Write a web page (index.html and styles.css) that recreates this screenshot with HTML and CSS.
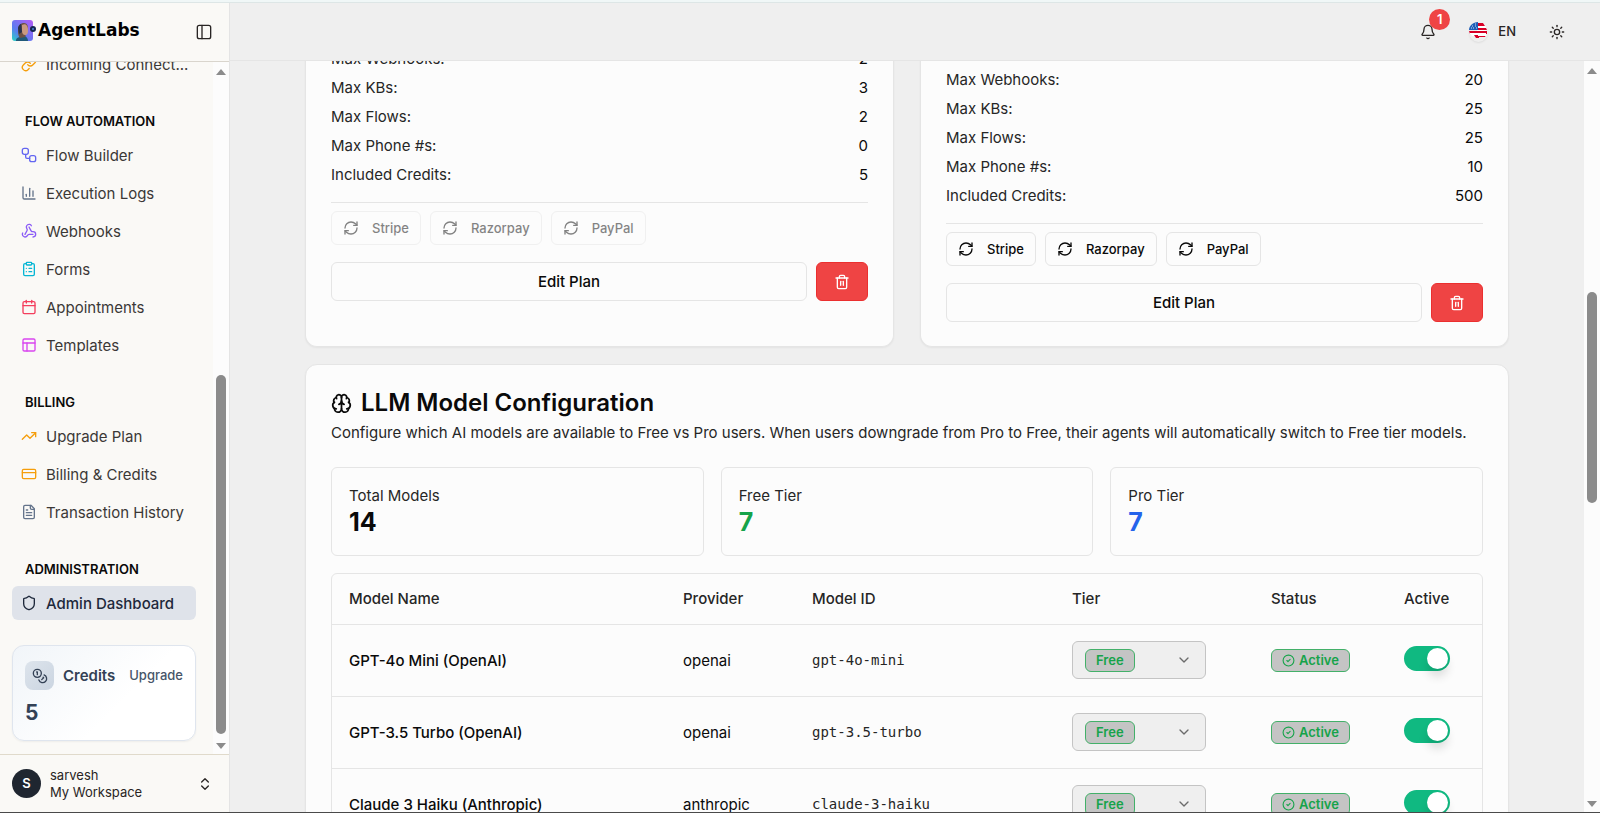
FILE: index.html
```html
<!DOCTYPE html>
<html lang="en">
<head>
  <meta charset="UTF-8">
  <meta name="viewport" content="width=device-width, initial-scale=1.0">
  <title>AgentLabs - Admin Dashboard</title>
  <link rel="stylesheet" href="styles.css">
</head>
<body>
  <!-- icon sprite -->
  <svg class="sprite" aria-hidden="true">
    <symbol id="i-link" viewBox="0 0 24 24"><path d="M10 13a5 5 0 0 0 7.54.54l3-3a5 5 0 0 0-7.07-7.07l-1.72 1.71"/><path d="M14 11a5 5 0 0 0-7.54-.54l-3 3a5 5 0 0 0 7.07 7.07l1.71-1.71"/></symbol>
    <symbol id="i-flow" viewBox="0 0 24 24"><rect x="2" y="2" width="9" height="9" rx="3"/><path d="M7 11v4a2 2 0 0 0 2 2h4"/><rect x="13" y="13" width="9" height="9" rx="3"/></symbol>
    <symbol id="i-chart" viewBox="0 0 24 24"><path d="M3 3v16a2 2 0 0 0 2 2h16"/><path d="M18 17V9"/><path d="M13 17V5"/><path d="M8 17v-3"/></symbol>
    <symbol id="i-webhook" viewBox="0 0 24 24"><path d="M18 16.98h-5.99c-1.1 0-1.95.94-2.48 1.9A4 4 0 0 1 2 17c.01-.7.2-1.4.57-2"/><path d="m6 17 3.13-5.78c.53-.97.1-2.18-.5-3.1a4 4 0 1 1 6.89-4.06"/><path d="m12 6 3.13 5.73C15.66 12.7 16.9 13 18 13a4 4 0 0 1 0 8"/></symbol>
    <symbol id="i-clipboard" viewBox="0 0 24 24"><rect x="8" y="2" width="8" height="4" rx="1"/><path d="M16 4h2a2 2 0 0 1 2 2v14a2 2 0 0 1-2 2H6a2 2 0 0 1-2-2V6a2 2 0 0 1 2-2h2"/><path d="M12 11h4"/><path d="M12 16h4"/><path d="M8 11h.01"/><path d="M8 16h.01"/></symbol>
    <symbol id="i-calendar" viewBox="0 0 24 24"><path d="M8 2v4"/><path d="M16 2v4"/><rect x="3" y="4" width="18" height="18" rx="2"/><path d="M3 10h18"/></symbol>
    <symbol id="i-template" viewBox="0 0 24 24"><rect x="3" y="3" width="18" height="18" rx="2"/><path d="M3 9h18"/><path d="M9 21V9"/></symbol>
    <symbol id="i-trend" viewBox="0 0 24 24"><path d="M16 7h6v6"/><path d="m22 7-8.5 8.5-5-5L2 17"/></symbol>
    <symbol id="i-card" viewBox="0 0 24 24"><rect x="2" y="5" width="20" height="14" rx="2"/><path d="M2 10h20"/></symbol>
    <symbol id="i-file" viewBox="0 0 24 24"><path d="M15 2H6a2 2 0 0 0-2 2v16a2 2 0 0 0 2 2h12a2 2 0 0 0 2-2V7Z"/><path d="M14 2v4a2 2 0 0 0 2 2h4"/><path d="M10 9H8"/><path d="M16 13H8"/><path d="M16 17H8"/></symbol>
    <symbol id="i-shield" viewBox="0 0 24 24"><path d="M20 13c0 5-3.5 7.5-7.66 8.95a1 1 0 0 1-.67-.01C7.5 20.5 4 18 4 13V6a1 1 0 0 1 1-1c2 0 4.5-1.2 6.24-2.72a1.17 1.17 0 0 1 1.52 0C14.51 3.81 17 5 19 5a1 1 0 0 1 1 1z"/></symbol>
    <symbol id="i-coins" viewBox="0 0 24 24"><circle cx="8" cy="8" r="6"/><path d="M18.09 10.37A6 6 0 1 1 10.34 18"/><path d="M7 6h1v4"/><path d="m16.71 13.88.7.71-2.82 2.82"/></symbol>
    <symbol id="i-updown" viewBox="0 0 24 24"><path d="m7 15 5 5 5-5"/><path d="m7 9 5-5 5 5"/></symbol>
    <symbol id="i-down" viewBox="0 0 24 24"><path d="m6 9 6 6 6-6"/></symbol>
    <symbol id="i-panel" viewBox="0 0 24 24"><rect x="2" y="2" width="20" height="20" rx="3"/><path d="M9 2v20"/></symbol>
    <symbol id="i-bell" viewBox="0 0 24 24"><path d="M10.27 21a2 2 0 0 0 3.46 0"/><path d="M3.26 15.33A1 1 0 0 0 4 17h16a1 1 0 0 0 .74-1.67C19.41 13.96 18 12.5 18 8A6 6 0 0 0 6 8c0 4.5-1.41 5.96-2.74 7.33"/></symbol>
    <symbol id="i-sun" viewBox="0 0 24 24"><circle cx="12" cy="12" r="4"/><path d="M12 2v2"/><path d="M12 20v2"/><path d="m4.93 4.93 1.41 1.41"/><path d="m17.66 17.66 1.41 1.41"/><path d="M2 12h2"/><path d="M20 12h2"/><path d="m6.34 17.66-1.41 1.41"/><path d="m19.07 4.93-1.41 1.41"/></symbol>
    <symbol id="i-refresh" viewBox="0 0 24 24"><path d="M3 12a9 9 0 0 1 9-9 9.75 9.75 0 0 1 6.74 2.74L21 8"/><path d="M21 3v5h-5"/><path d="M21 12a9 9 0 0 1-9 9 9.75 9.75 0 0 1-6.74-2.74L3 16"/><path d="M8 16H3v5"/></symbol>
    <symbol id="i-trash" viewBox="0 0 24 24"><path d="M3 6h18"/><path d="M19 6v14c0 1-1 2-2 2H7c-1 0-2-1-2-2V6"/><path d="M8 6V4c0-1 1-2 2-2h4c1 0 2 1 2 2v2"/><path d="M10 11v6"/><path d="M14 11v6"/></symbol>
    <symbol id="i-brain" viewBox="0 0 24 24"><path d="M12 18V5"/><path d="M15 13a4.17 4.17 0 0 1-3-4 4.17 4.17 0 0 1-3 4"/><path d="M17.6 6.5A3 3 0 1 0 12 5a3 3 0 1 0-5.6 1.5"/><path d="M18 5.13a4 4 0 0 1 2.53 5.77"/><path d="M18 18a4 4 0 0 0 2-7.46"/><path d="M19.97 17.48A4 4 0 1 1 12 18a4 4 0 1 1-7.97-.52"/><path d="M6 18a4 4 0 0 1-2-7.46"/><path d="M6 5.13a4 4 0 0 0-2.53 5.77"/></symbol>
    <symbol id="i-check" viewBox="0 0 24 24"><circle cx="12" cy="12" r="10"/><path d="m9 12 2 2 4-4"/></symbol>
  </svg>

  <div class="top-strip"></div>

  <div class="app">
    <!-- Sidebar -->
    <aside class="sidebar">
      <div class="sidebar-header">
        <a class="brand" href="#">
          <svg class="brand-logo" viewBox="0 0 24 21" aria-hidden="true">
            <defs>
              <linearGradient id="logo-bg" x1="0" y1="1" x2="1" y2="0">
                <stop offset="0" stop-color="#27d8c0"/>
                <stop offset=".35" stop-color="#5b7cf0"/>
                <stop offset="1" stop-color="#b55cf6"/>
              </linearGradient>
            </defs>
            <rect width="21" height="21" rx="3" fill="url(#logo-bg)"/>
            <path d="M4 21c0-3 2-4 5-4l4-1c2 1 3 3 3 5z" fill="#1f5a78"/>
            <path d="M6 9c0-4 3-6 6-6 3 0 4 3 4 5l-3 9-5 1c-2-2-2-5-2-9z" fill="#6b5145"/>
            <path d="M10 5c4-2 6 1 6 5s-1 5-3 5-3-2-3-4z" fill="#c99a80"/>
            <path d="M6 8c1-3 2-4 3-4l1 8-3 2z" fill="#27304f"/>
            <circle cx="21" cy="9" r="3" fill="#14264f"/>
            <circle cx="21" cy="9" r="1" fill="#4d86d8"/>
          </svg>
          <span>AgentLabs</span>
        </a>
        <button class="icon-btn" aria-label="Toggle sidebar"><svg class="icon"><use href="#i-panel"/></svg></button>
      </div>

      <div class="sidebar-body">
        <div class="sidebar-content">
          <nav class="nav">
            <ul class="nav-group">
              <li><a class="nav-item" href="#"><svg class="icon amber"><use href="#i-link"/></svg>Incoming Connect...</a></li>
            </ul>
            <ul class="nav-group">
              <li class="nav-label">FLOW AUTOMATION</li>
              <li><a class="nav-item" href="#"><svg class="icon indigo"><use href="#i-flow"/></svg>Flow Builder</a></li>
              <li><a class="nav-item" href="#"><svg class="icon slate"><use href="#i-chart"/></svg>Execution Logs</a></li>
              <li><a class="nav-item" href="#"><svg class="icon violet"><use href="#i-webhook"/></svg>Webhooks</a></li>
              <li><a class="nav-item" href="#"><svg class="icon cyan"><use href="#i-clipboard"/></svg>Forms</a></li>
              <li><a class="nav-item" href="#"><svg class="icon rose"><use href="#i-calendar"/></svg>Appointments</a></li>
              <li><a class="nav-item" href="#"><svg class="icon fuchsia"><use href="#i-template"/></svg>Templates</a></li>
            </ul>
            <ul class="nav-group">
              <li class="nav-label">BILLING</li>
              <li><a class="nav-item" href="#"><svg class="icon amber"><use href="#i-trend"/></svg>Upgrade Plan</a></li>
              <li><a class="nav-item" href="#"><svg class="icon amber"><use href="#i-card"/></svg>Billing &amp; Credits</a></li>
              <li><a class="nav-item" href="#"><svg class="icon slate"><use href="#i-file"/></svg>Transaction History</a></li>
            </ul>
            <ul class="nav-group">
              <li class="nav-label">ADMINISTRATION</li>
              <li><a class="nav-item active" href="#"><svg class="icon"><use href="#i-shield"/></svg>Admin Dashboard</a></li>
            </ul>
          </nav>

          <div class="credits">
            <div class="credits-top">
              <span class="credits-icon"><svg class="icon"><use href="#i-coins"/></svg></span>
              <span class="credits-title">Credits</span>
              <a class="credits-link" href="#">Upgrade</a>
            </div>
            <div class="credits-value">5</div>
          </div>
        </div>
        <div class="scrollbar">
          <span class="arrow up"></span>
          <div class="track"><div class="thumb nav-thumb"></div></div>
          <span class="arrow down"></span>
        </div>
      </div>

      <button class="user">
        <span class="avatar">S</span>
        <span class="user-text">
          <span>sarvesh</span>
          <span>My Workspace</span>
        </span>
        <svg class="icon"><use href="#i-updown"/></svg>
      </button>
    </aside>

    <!-- Right side -->
    <div class="page">
      <header class="topbar">
        <button class="icon-btn bell" aria-label="Notifications">
          <svg class="icon"><use href="#i-bell"/></svg>
          <span class="bell-count">1</span>
        </button>
        <button class="lang">
          <span class="flag">
            <svg viewBox="0 0 18 18" aria-hidden="true">
              <path d="M8 1h6l3 4v9H3L0 9h8z" fill="#fff"/>
              <path d="M8 1h6l2 3H8zM8 6h9l1 2H8zM0 9h18v3H1zM5 13h12l-1 2h-6v1H7z" fill="#d80027"/>
              <path d="M1 11h16v1H1zM9 13h8v1H9z" fill="#fff"/>
              <path d="M9 0v8H0c0-4 4-8 9-8z" fill="#1f5fb8"/>
              <path d="M3 4h1M6 4h1M4 6h1M7 6h1M2 6h1M6 2h1" stroke="#cfe0f5"/>
            </svg>
          </span>
          EN
        </button>
        <button class="icon-btn" aria-label="Toggle theme"><svg class="icon"><use href="#i-sun"/></svg></button>
      </header>

      <div class="page-body">
        <main class="main">
          <div class="content">
            <!-- Plans -->
            <div class="plans">
              <section class="card plan">
                <dl class="limits">
                  <div><dt>Max Webhooks:</dt><dd>2</dd></div>
                  <div><dt>Max KBs:</dt><dd>3</dd></div>
                  <div><dt>Max Flows:</dt><dd>2</dd></div>
                  <div><dt>Max Phone #s:</dt><dd>0</dd></div>
                  <div><dt>Included Credits:</dt><dd>5</dd></div>
                </dl>
                <div class="sync">
                  <button class="btn btn-sm" disabled><svg class="icon"><use href="#i-refresh"/></svg>Stripe</button>
                  <button class="btn btn-sm" disabled><svg class="icon"><use href="#i-refresh"/></svg>Razorpay</button>
                  <button class="btn btn-sm" disabled><svg class="icon"><use href="#i-refresh"/></svg>PayPal</button>
                </div>
                <div class="plan-actions">
                  <button class="btn btn-edit">Edit Plan</button>
                  <button class="btn btn-delete" aria-label="Delete plan"><svg class="icon"><use href="#i-trash"/></svg></button>
                </div>
              </section>

              <section class="card plan plan-pro">
                <dl class="limits">
                  <div><dt>Max Webhooks:</dt><dd>20</dd></div>
                  <div><dt>Max KBs:</dt><dd>25</dd></div>
                  <div><dt>Max Flows:</dt><dd>25</dd></div>
                  <div><dt>Max Phone #s:</dt><dd>10</dd></div>
                  <div><dt>Included Credits:</dt><dd>500</dd></div>
                </dl>
                <div class="sync">
                  <button class="btn btn-sm"><svg class="icon"><use href="#i-refresh"/></svg>Stripe</button>
                  <button class="btn btn-sm"><svg class="icon"><use href="#i-refresh"/></svg>Razorpay</button>
                  <button class="btn btn-sm"><svg class="icon"><use href="#i-refresh"/></svg>PayPal</button>
                </div>
                <div class="plan-actions">
                  <button class="btn btn-edit">Edit Plan</button>
                  <button class="btn btn-delete" aria-label="Delete plan"><svg class="icon"><use href="#i-trash"/></svg></button>
                </div>
              </section>
            </div>

            <!-- LLM models -->
            <section class="card llm">
              <h2 class="llm-title"><svg class="icon"><use href="#i-brain"/></svg>LLM Model Configuration</h2>
              <p class="llm-desc">Configure which AI models are available to Free vs Pro users. When users downgrade from Pro to Free, their agents will automatically switch to Free tier models.</p>

              <div class="stats">
                <div class="stat"><div>Total Models</div><strong>14</strong></div>
                <div class="stat"><div>Free Tier</div><strong class="green">7</strong></div>
                <div class="stat"><div>Pro Tier</div><strong class="blue">7</strong></div>
              </div>

              <div class="table-box">
                <table class="models">
                  <colgroup>
                    <col class="c-name"><col class="c-provider"><col class="c-id"><col class="c-tier"><col class="c-status"><col class="c-active">
                  </colgroup>
                  <thead>
                    <tr>
                      <th>Model Name</th>
                      <th>Provider</th>
                      <th>Model ID</th>
                      <th>Tier</th>
                      <th>Status</th>
                      <th>Active</th>
                    </tr>
                  </thead>
                  <tbody>
                    <tr>
                      <td class="name">GPT-4o Mini (OpenAI)</td>
                      <td>openai</td>
                      <td class="mono">gpt-4o-mini</td>
                      <td><label class="tier"><select aria-label="Tier for GPT-4o Mini"><option>Free</option><option>Pro</option></select><svg class="icon"><use href="#i-down"/></svg></label></td>
                      <td><span class="status"><svg class="icon"><use href="#i-check"/></svg>Active</span></td>
                      <td><input class="switch" type="checkbox" checked aria-label="GPT-4o Mini active"></td>
                    </tr>
                    <tr>
                      <td class="name">GPT-3.5 Turbo (OpenAI)</td>
                      <td>openai</td>
                      <td class="mono">gpt-3.5-turbo</td>
                      <td><label class="tier"><select aria-label="Tier for GPT-3.5 Turbo"><option>Free</option><option>Pro</option></select><svg class="icon"><use href="#i-down"/></svg></label></td>
                      <td><span class="status"><svg class="icon"><use href="#i-check"/></svg>Active</span></td>
                      <td><input class="switch" type="checkbox" checked aria-label="GPT-3.5 Turbo active"></td>
                    </tr>
                    <tr>
                      <td class="name">Claude 3 Haiku (Anthropic)</td>
                      <td>anthropic</td>
                      <td class="mono">claude-3-haiku</td>
                      <td><label class="tier"><select aria-label="Tier for Claude 3 Haiku"><option>Free</option><option>Pro</option></select><svg class="icon"><use href="#i-down"/></svg></label></td>
                      <td><span class="status"><svg class="icon"><use href="#i-check"/></svg>Active</span></td>
                      <td><input class="switch" type="checkbox" checked aria-label="Claude 3 Haiku active"></td>
                    </tr>
                  </tbody>
                </table>
              </div>
            </section>
          </div>
        </main>
        <div class="scrollbar">
          <span class="arrow up"></span>
          <div class="track"><div class="thumb page-thumb"></div></div>
          <span class="arrow down"></span>
        </div>
      </div>
    </div>
  </div>
</body>
</html>
```
FILE: styles.css
```css
* {
  margin: 0;
  padding: 0;
  box-sizing: border-box;
}

body {
  display: flex;
  flex-direction: column;
  height: 100vh;
  overflow: hidden;
  border-bottom: 1px solid #4a4a4a;
  background-color: #efefef;
  color: #0a0a0a;
  font-family: Inter, "Liberation Sans", sans-serif;
  font-size: 15px;
  line-height: 21px;
}

ul {
  list-style: none;
}

a {
  color: inherit;
  text-decoration: none;
}

button,
select {
  font: inherit;
  color: inherit;
  background: none;
  border: none;
  cursor: pointer;
}

.sprite {
  display: none;
}

.icon {
  width: 16px;
  height: 16px;
  flex-shrink: 0;
  fill: none;
  stroke: currentColor;
  stroke-width: 2;
  stroke-linecap: round;
  stroke-linejoin: round;
}

.amber { color: #f59e0b; }
.indigo { color: #6366f1; }
.slate { color: #64748b; }
.violet { color: #8b5cf6; }
.cyan { color: #06b6d4; }
.rose { color: #f43f5e; }
.fuchsia { color: #d946ef; }

.top-strip {
  height: 3px;
  flex-shrink: 0;
  background-color: #f0f7f7;
  border-bottom: 1px solid #dde6e6;
}

.app {
  display: flex;
  flex: 1;
  min-height: 0;
}

/* Sidebar */
.sidebar {
  display: flex;
  flex-direction: column;
  width: 230px;
  flex-shrink: 0;
  background-color: #faf9f6;
  border-right: 1px solid #e4e4e4;
}

.sidebar-header {
  display: flex;
  align-items: center;
  justify-content: space-between;
  height: 59px;
  flex-shrink: 0;
  padding: 0 12px;
  border-bottom: 1px solid #d9d5cd;
}

.brand {
  display: flex;
  align-items: center;
  gap: 2px;
  padding-bottom: 3px;
  color: #000;
  font-family: "DejaVu Sans", sans-serif;
  font-size: 17px;
  font-weight: 700;
}

.brand-logo {
  width: 24px;
  height: 21px;
}

.icon-btn {
  display: flex;
  align-items: center;
  justify-content: center;
  width: 26px;
  height: 26px;
  color: #292524;
}

.sidebar-body {
  display: flex;
  flex: 1;
  min-height: 0;
}

.sidebar-content {
  display: flex;
  flex-direction: column;
  justify-content: flex-end;
  flex: 1;
  padding: 0 17px 13px 12px;
  overflow: hidden;
}

.nav {
  display: flex;
  flex-direction: column;
  gap: 23px;
}

.nav-group {
  display: flex;
  flex-direction: column;
  gap: 4px;
}

.nav-label {
  height: 30px;
  padding: 0 13px;
  font-size: 13px;
  font-weight: 600;
  line-height: 34px;
}

.nav-item {
  display: flex;
  align-items: center;
  gap: 9px;
  height: 34px;
  padding: 0 9px;
  border-radius: 6px;
  color: #3b3836;
  white-space: nowrap;
}

.nav-item.active {
  background-color: #dfe3ea;
  color: #1e293b;
  font-weight: 500;
}

.credits {
  margin-top: 25px;
  height: 96px;
  padding: 15px 12px;
  border: 1px solid #dfe5ee;
  border-radius: 12px;
  background: linear-gradient(135deg, #f1f5f9, #ffffff 60%);
  box-shadow: 0 1px 2px rgba(0, 0, 0, 0.05);
  color: #334155;
}

.credits-top {
  display: flex;
  align-items: center;
}

.credits-icon {
  display: flex;
  align-items: center;
  justify-content: center;
  width: 29px;
  height: 29px;
  margin-right: 9px;
  border-radius: 8px;
  background: linear-gradient(135deg, #dde4ec, #cbd5e1);
}

.credits-title {
  font-weight: 600;
}

.credits-link {
  margin-left: auto;
  color: #475569;
  font-size: 13px;
  font-weight: 500;
}

.credits-value {
  margin-top: 8px;
  font-size: 21px;
  font-weight: 700;
  line-height: 29px;
}

.user {
  display: flex;
  align-items: center;
  gap: 9px;
  height: 58px;
  flex-shrink: 0;
  padding: 0 16px 0 12px;
  border-top: 1px solid #e0dacb;
  color: #292524;
  text-align: left;
}

.avatar {
  display: flex;
  align-items: center;
  justify-content: center;
  width: 29px;
  height: 29px;
  border-radius: 50%;
  background-color: #1f2630;
  color: #fff;
  font-size: 13px;
  font-weight: 600;
}

.user-text {
  display: flex;
  flex-direction: column;
  flex: 1;
  font-size: 13px;
  line-height: 17px;
}

/* Scrollbars */
.scrollbar {
  display: flex;
  flex-direction: column;
  align-items: center;
  width: 16px;
  flex-shrink: 0;
  padding: 7px 0 5px;
  background-color: #fcfcfc;
}

.arrow {
  border: 5px solid transparent;
}

.arrow.up {
  border-top: none;
  border-bottom: 6px solid #8b8b8b;
}

.arrow.down {
  border-bottom: none;
  border-top: 6px solid #8b8b8b;
}

.track {
  flex: 1;
  min-height: 0;
  padding: 4px 0 7px;
}

.thumb {
  width: 10px;
  border-radius: 5px;
  background-color: #8b8b8b;
}

.nav-thumb {
  height: 359px;
  margin-top: 296px;
}

.page-thumb {
  height: 211px;
  margin-top: 214px;
}

/* Top bar */
.page {
  display: flex;
  flex-direction: column;
  flex: 1;
  min-width: 0;
}

.topbar {
  display: flex;
  align-items: center;
  justify-content: flex-end;
  gap: 28px;
  height: 58px;
  flex-shrink: 0;
  padding: 0 30px;
  border-bottom: 1px solid #e5e5e5;
}

.bell {
  position: relative;
}

.bell-count {
  position: absolute;
  top: -10px;
  right: -9px;
  width: 21px;
  height: 21px;
  border-radius: 50%;
  background-color: #ef4444;
  color: #fff;
  font-size: 13px;
  font-weight: 600;
  line-height: 21px;
  text-align: center;
}

.lang {
  display: flex;
  align-items: center;
  gap: 10px;
  color: #292524;
  font-size: 13px;
  font-weight: 500;
}

.flag {
  width: 19px;
  height: 20px;
  border-radius: 50%;
  box-shadow: 0 1px 2px rgba(0, 0, 0, 0.08);
}

.flag svg {
  display: block;
  width: 18px;
  height: 18px;
}

.page-body {
  display: flex;
  flex: 1;
  min-height: 0;
}

.main {
  flex: 1;
  min-width: 0;
  overflow: hidden;
  padding: 0 75px;
}

.content {
  display: flex;
  flex-direction: column;
  gap: 17px;
  max-width: 1280px;
  margin: -13px auto 0;
}

.card {
  padding: 25px;
  border: 1px solid #e5e5e5;
  border-radius: 12px;
  background-color: #fcfcfc;
  box-shadow: 0 1px 2px rgba(0, 0, 0, 0.05);
}

/* Plan cards */
.plans {
  display: grid;
  grid-template-columns: 1fr 1fr;
  gap: 26px;
}

.plan {
  border-top: none;
  border-radius: 0 0 12px 12px;
  padding-top: 0;
  padding-bottom: 24px;
}

.plan-pro {
  padding-top: 21px;
}

.limits {
  display: flex;
  flex-direction: column;
  gap: 8px;
  padding-bottom: 17px;
  border-bottom: 1px solid #e5e5e5;
}

.limits div {
  display: flex;
  justify-content: space-between;
}

.limits dt {
  color: #262626;
}

.sync {
  display: flex;
  gap: 9px;
  padding: 8px 0 17px;
}

.btn {
  display: flex;
  align-items: center;
  justify-content: center;
  border: 1px solid #e5e5e5;
  border-radius: 6px;
  font-weight: 500;
}

.btn-sm {
  gap: 13px;
  height: 34px;
  padding: 0 11px;
  font-size: 13px;
}

.btn:disabled {
  opacity: 0.5;
}

.plan-actions {
  display: flex;
  gap: 9px;
}

.btn-edit {
  flex: 1;
  height: 39px;
}

.btn-delete {
  width: 52px;
  height: 39px;
  border-color: #eb2f2f;
  background-color: #ef4444;
  color: #fff;
}

/* LLM configuration */
.llm-title {
  display: flex;
  align-items: center;
  gap: 9px;
  font-size: 24px;
  font-weight: 600;
  line-height: 26px;
}

.llm-title .icon {
  width: 21px;
  height: 21px;
}

.llm-desc {
  margin-top: 6px;
  color: #262626;
}

.stats {
  display: grid;
  grid-template-columns: repeat(3, 1fr);
  gap: 17px;
  margin: 24px 0 17px;
}

.stat {
  padding: 17px;
  border: 1px solid #e5e5e5;
  border-radius: 6px;
  color: #262626;
}

.stat strong {
  display: block;
  color: #0a0a0a;
  font-size: 25px;
  line-height: 32px;
}

.stat .green {
  color: #16a34a;
}

.stat .blue {
  color: #2563eb;
}

.table-box {
  border: 1px solid #e5e5e5;
  border-radius: 6px;
}

.models {
  width: 100%;
  table-layout: fixed;
  border-collapse: collapse;
}

.c-name { width: 334px; }
.c-provider { width: 129px; }
.c-id { width: 260px; }
.c-tier { width: 199px; }
.c-status { width: 133px; }
.c-active { width: 95px; }

.models th,
.models td {
  padding: 0 17px;
  text-align: left;
  vertical-align: middle;
}

.models th {
  height: 50px;
  color: #262626;
  font-weight: 500;
}

.models td {
  height: 72px;
  border-top: 1px solid #e5e5e5;
}

.models .name {
  font-weight: 500;
}

.models .mono {
  color: #262626;
  font-family: "DejaVu Sans Mono", monospace;
  font-size: 14px;
}

.tier {
  display: flex;
  align-items: center;
  justify-content: space-between;
  width: 134px;
  height: 38px;
  padding: 0 13px 0 12px;
  border: 1px solid #c4c4c4;
  border-radius: 6px;
  background-color: #efefef;
}

.tier .icon {
  color: #6b6b6b;
}

.tier select,
.status {
  height: 23px;
  padding: 0 10px;
  border: 1px solid #43b069;
  border-radius: 6px;
  background-color: #c4c4c4;
  color: #16a34a;
  font-size: 13px;
  font-weight: 600;
}

.tier select {
  appearance: none;
}

.status {
  display: inline-flex;
  align-items: center;
  gap: 4px;
  vertical-align: middle;
}

.status .icon {
  width: 13px;
  height: 13px;
}

.switch {
  appearance: none;
  display: block;
  width: 46px;
  height: 25px;
  margin-bottom: 4px;
  padding: 2px;
  border-radius: 13px;
  background-color: #10b981;
  cursor: pointer;
}

.switch::before {
  content: "";
  display: block;
  width: 21px;
  height: 21px;
  border-radius: 50%;
  background-color: #fff;
  box-shadow: 0 8px 10px rgba(0, 0, 0, 0.12);
}

.switch:checked::before {
  margin-left: auto;
}
```
